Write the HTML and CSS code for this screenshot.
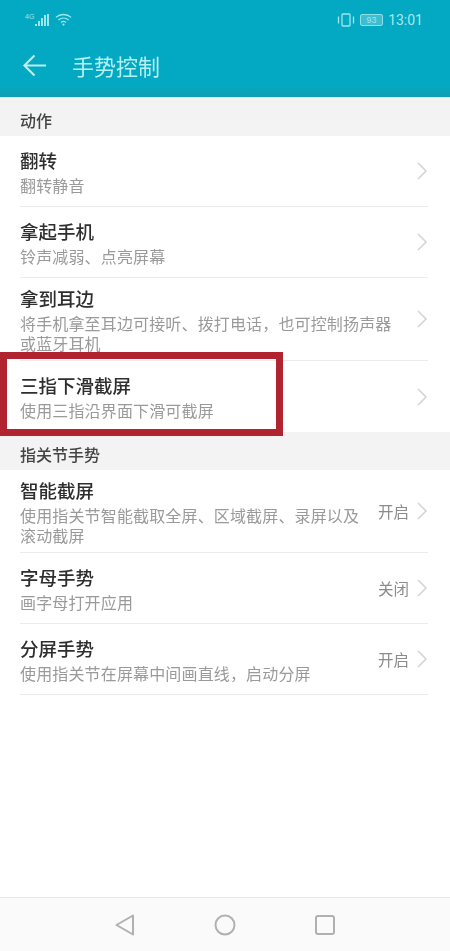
FILE: index.html
```html
<!DOCTYPE html>
<html lang="zh-CN">
<head>
<meta charset="utf-8">
<title>手势控制</title>
<link rel="stylesheet" href="styles.css">
</head>
<body>
<div class="page">
  <header class="appbar">
    <div class="status">
      <div class="status-left">
        <span class="net">4G</span>
        <svg class="signal" width="15" height="14" viewBox="0 0 15 14"><g fill="#9fe6ea"><rect x="0" y="11" width="2" height="2"/><rect x="3" y="8" width="2" height="5"/><rect x="6" y="5" width="2" height="8"/><rect x="9" y="2" width="2" height="11"/><rect x="12" y="1" width="2" height="12"/></g></svg>
        <svg class="wifi" width="17" height="15" viewBox="0 0 20 16"><g fill="none" stroke="#9fe6ea" stroke-width="1.500"><path d="M1 5.500C6 1 14 1 19 5.500"/><path d="M4 8.500C7.500 5.500 12.500 5.500 16 8.500"/><path d="M7 11.500C8.800 10 11.200 10 13 11.500"/></g><circle cx="10" cy="14" r="1.300" fill="#9fe6ea"/></svg>
      </div>
      <div class="status-right">
        <svg width="18" height="14" viewBox="0 0 18 14"><g fill="none" stroke="#9fe6ea" stroke-width="1.300"><rect x="5" y="1" width="8" height="12" rx="1"/><path d="M1.500 3.500v7M16.500 3.500v7"/></g></svg>
        <span class="battery">93</span>
        <span class="time">13:01</span>
      </div>
    </div>
    <div class="toolbar">
      <svg class="back" width="25" height="25" viewBox="0 0 26 26"><path d="M25 13H2.500M13 2.500L2.500 13L13 23.500" fill="none" stroke="#b5f0f2" stroke-width="2.200"/></svg>
      <h1 class="title">手势控制</h1>
    </div>
  </header>

  <main class="content">
    <div class="section">动作</div>
    <ul class="list">
      <li class="row">
        <div class="text"><div class="name">翻转</div><div class="desc">翻转静音</div></div>
        <svg class="chev" width="12" height="20" viewBox="0 0 12 20"><path d="M2 2l8 8-8 8"/></svg>
      </li>
      <li class="row">
        <div class="text"><div class="name">拿起手机</div><div class="desc">铃声减弱、点亮屏幕</div></div>
        <svg class="chev" width="12" height="20" viewBox="0 0 12 20"><path d="M2 2l8 8-8 8"/></svg>
      </li>
      <li class="row">
        <div class="text"><div class="name">拿到耳边</div><div class="desc">将手机拿至耳边可接听、拨打电话，也可控制扬声器或蓝牙耳机</div></div>
        <svg class="chev" width="12" height="20" viewBox="0 0 12 20"><path d="M2 2l8 8-8 8"/></svg>
      </li>
      <li class="row last">
        <div class="text"><div class="name">三指下滑截屏</div><div class="desc">使用三指沿界面下滑可截屏</div></div>
        <svg class="chev" width="12" height="20" viewBox="0 0 12 20"><path d="M2 2l8 8-8 8"/></svg>
        <div class="highlight"></div>
      </li>
    </ul>
    <div class="section">指关节手势</div>
    <ul class="list">
      <li class="row">
        <div class="text narrow"><div class="name">智能截屏</div><div class="desc">使用指关节智能截取全屏、区域截屏、录屏以及滚动截屏</div></div>
        <span class="state">开启</span>
        <svg class="chev" width="12" height="20" viewBox="0 0 12 20"><path d="M2 2l8 8-8 8"/></svg>
      </li>
      <li class="row">
        <div class="text narrow"><div class="name">字母手势</div><div class="desc">画字母打开应用</div></div>
        <span class="state">关闭</span>
        <svg class="chev" width="12" height="20" viewBox="0 0 12 20"><path d="M2 2l8 8-8 8"/></svg>
      </li>
      <li class="row">
        <div class="text narrow"><div class="name">分屏手势</div><div class="desc">使用指关节在屏幕中间画直线，启动分屏</div></div>
        <span class="state">开启</span>
        <svg class="chev" width="12" height="20" viewBox="0 0 12 20"><path d="M2 2l8 8-8 8"/></svg>
      </li>
    </ul>
  </main>

  <nav class="navbar">
    <svg width="22" height="24" viewBox="0 0 22 24"><path d="M19 2.500L2.500 12L19 21.500z" fill="none" stroke="#b0b0b0" stroke-width="2" stroke-linejoin="round"/></svg>
    <svg width="22" height="22" viewBox="0 0 22 22"><circle cx="11" cy="11" r="9.500" fill="none" stroke="#b0b0b0" stroke-width="2"/></svg>
    <svg width="22" height="22" viewBox="0 0 22 22"><rect x="2" y="2" width="18" height="18" rx="2" fill="none" stroke="#b0b0b0" stroke-width="2"/></svg>
  </nav>
</div>
</body>
</html>
```
FILE: styles.css
```css
* { box-sizing: border-box; }
html, body { margin: 0; padding: 0; }
body { font-family: "Noto Sans CJK SC", "Noto Sans", sans-serif; background: #fff; }
.page { width: 450px; height: 951px; display: flex; flex-direction: column; overflow: hidden; filter: blur(.45px); }
.appbar { height: 98px; background: linear-gradient(#03a9c2 88%, #0f9fb2); border-bottom: 1px solid #c8f2f2; flex: none; display: flex; flex-direction: column; }
.status { height: 36px; padding: 3px 27px 0 25px; display: flex; justify-content: space-between; align-items: center; }
.status-left, .status-right { display: flex; align-items: center; }
.status-left { gap: 1px; }
.status-right { gap: 5px; }
.net { font: 7px/1 "Liberation Sans", sans-serif; color: #9fe6ea; align-self: flex-start; margin-top: 1px; }
.signal { margin-left: 0; }
.wifi { margin-left: 4px; }
.battery { font: 9px/10px "Liberation Sans", sans-serif; width: 23px; text-align: center; color: #9fe6ea; background: #3fbdd0; border: 1px solid #8fe0e6; border-radius: 2px; }
.time { font: 14px/1 "Roboto", sans-serif; color: #a8e8ec; }
.toolbar { flex: 1; display: flex; align-items: center; padding: 0 0 3px 22px; gap: 25px; }
.title { margin: 0; font-size: 22px; font-weight: 400; color: #b5f0f2; line-height: 28px; }
.content { flex: 1; display: flex; flex-direction: column; }
.section { height: 38px; flex: none; background: #f3f3f3; padding: 12px 20px 0; font-size: 16px; line-height: 20px; font-weight: 500; color: #444; }
.list { list-style: none; margin: 0; padding: 0; }
.row { position: relative; display: flex; align-items: center; min-height: 71px; margin: 0 22px 0 20px; padding: 7.500px 0; border-bottom: 1px solid #ececec; }
.row.last { border-bottom: 0; }
.text { flex: 1; min-width: 0; padding-right: 16px; }
.text.narrow { padding-right: 8px; }
.name { font-size: 18.500px; line-height: 25px; margin-bottom: 2px; font-weight: 500; color: #2e2e2e; }
.desc { font-size: 16px; line-height: 20px; letter-spacing: .15px; color: #9a9a9a; }
.state { flex: none; font-size: 15.500px; color: #8c8c8c; margin-right: 7px; }
.chev { flex: none; }
.chev path { fill: none; stroke: #d4d4d4; stroke-width: 1.600; }
.highlight { position: absolute; left: -20px; top: -9px; width: 283px; height: 84px; border: 7px solid #b0232f; pointer-events: none; }
.navbar { height: 54px; flex: none; background: #fafafa; border-top: 1px solid #e8e8e8; display: flex; align-items: center; justify-content: center; gap: 78px; }
```
